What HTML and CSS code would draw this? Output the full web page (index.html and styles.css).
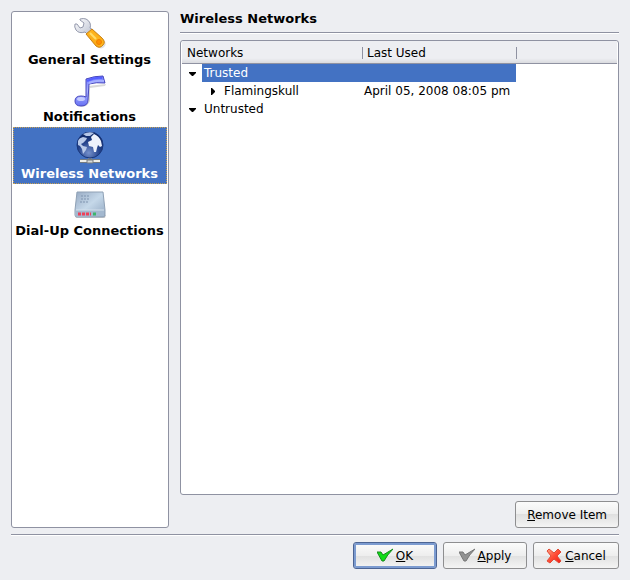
FILE: index.html
```html
<!DOCTYPE html>
<html lang="en">
<head>
    <meta charset="UTF-8">
    <meta name="viewport" content="width=device-width, initial-scale=1.0">
    <title>Wireless Networks</title>
    <link rel="stylesheet" href="styles.css">
</head>
<body>
    <div class="main">
        <nav class="sidebar">
            <a href="#general">
                <svg width="32" height="32" viewBox="0 0 32 32">
                    <defs>
                        <linearGradient id="steel" x1="0" y1="0" x2="1" y2="1">
                            <stop offset="0" stop-color="#ffffff"/>
                            <stop offset="1" stop-color="#b9bfd0"/>
                        </linearGradient>
                        <linearGradient id="orange" x1="0" y1="1" x2="1" y2="0">
                            <stop offset="0" stop-color="#f08a00"/>
                            <stop offset="0.5" stop-color="#ffb820"/>
                            <stop offset="1" stop-color="#f59a08"/>
                        </linearGradient>
                    </defs>
                    <path d="M14 17 L23 28 Q27 33 31 28 Q33 25 29 21 L20 13Z" fill="#000" opacity="0.12"/>
                    <path d="M6 1 Q13 -1 16 5 Q17 8 16 10 L19 12 L14 17 L11 14 Q5 16 2 12 Q0 9 1 6 L3 6 L6 10 L9 9 L10 5 L6 2 Z" fill="url(#steel)" stroke="#9499ac"/>
                    <path d="M12 16 L18 11 L28 20 Q32 24 29 27 Q26 31 22 28 Z" fill="url(#orange)" stroke="#c98215"/>
                    <path d="M16 15 L22 21" stroke="#ffdc68" stroke-width="2"/>
                    <circle cx="25" cy="24" r="2.500" fill="#ff8f00" stroke="#f08000"/>
                </svg>
                <span>General Settings</span>
            </a>
            <a href="#notifications">
                <svg width="32" height="32" viewBox="0 0 32 32">
                    <defs>
                        <linearGradient id="note" x1="0" y1="0" x2="0" y2="1">
                            <stop offset="0" stop-color="#6f78ff"/>
                            <stop offset="0.5" stop-color="#a9b2ff"/>
                            <stop offset="1" stop-color="#6872f4"/>
                        </linearGradient>
                    </defs>
                    <path d="M14 11 L32 9 L31 11 L16 13 L16 26 Q13 33 5 32 Q12 30 14 26Z" fill="#000" opacity="0.15"/>
                    <path d="M12 4 Q20 1 29 1 L31 8 Q22 7 15 9 L14 25 Q14 31 7 31 Q1 31 1 26 Q1 21 7 21 Q10 21 12 22 Z" fill="url(#note)" stroke="#4747bd"/>
                    <path d="M13 6 Q21 2 28 3" stroke="#555eff" stroke-width="2" fill="none"/>
                    <path d="M15 8 Q22 5 30 6" stroke="#a5afff" stroke-width="2" fill="none"/>
                    <ellipse cx="7" cy="24" rx="4" ry="2" fill="#c5ccff"/>
                </svg>
                <span>Notifications</span>
            </a>
            <a href="#wireless" class="selected">
                <svg width="32" height="32" viewBox="0 0 32 32">
                    <defs>
                        <radialGradient id="globe" cx="0.45" cy="0.8" r="0.8">
                            <stop offset="0" stop-color="#7590cb"/>
                            <stop offset="0.5" stop-color="#26458e"/>
                            <stop offset="1" stop-color="#081f5b"/>
                        </radialGradient>
                    </defs>
                    <path d="M14 26 H18 V29 H14Z" fill="#8b9299"/>
                    <path d="M6 29 H26" stroke="#747b81" stroke-width="4"/>
                    <path d="M6 29 H13 M19 29 H26" stroke="#eeeee8" stroke-width="2"/>
                    <path d="M13 28 H19 V31 H13Z" fill="#d8dad6" stroke="#777d83"/>
                    <circle cx="16" cy="13" r="13" fill="url(#globe)" stroke="#19377c"/>
                    <path d="M4 9 Q5 6 9 5 L13 6 L12 8 L9 11 L7 12 L9 14 L13 15 L12 18 L9 22 L8 17 L6 14 L4 13Z" fill="#b9cae9"/>
                    <path d="M17 5 L20 2 Q25 4 27 9 L28 14 L26 15 L24 13 L23 16 L22 20 L20 20 L19 15 L15 14 L14 10 L18 8Z" fill="#edf2fc"/>
                    <path d="M9 2 Q15 -1 20 1 L16 4 L12 4Z" fill="#b6c8e9"/>
                </svg>
                <span>Wireless Networks</span>
            </a>
            <a href="#dialup">
                <svg width="32" height="32" viewBox="0 0 32 32">
                    <defs>
                        <linearGradient id="modem" x1="0" y1="0" x2="1" y2="1">
                            <stop offset="0" stop-color="#97aac3"/>
                            <stop offset="0.5" stop-color="#c5d8e9"/>
                            <stop offset="1" stop-color="#91a7c1"/>
                        </linearGradient>
                    </defs>
                    <path d="M1 27 L2 29 H31 L32 26Z" fill="#000" opacity="0.2"/>
                    <path d="M3 3 H29 L31 21 V26 Q31 28 29 28 H3 Q1 28 1 26 V21Z" fill="url(#modem)" stroke="#8fa1b5"/>
                    <path d="M2 21 H30 V27 H2Z" fill="#a3b8cf"/>
                    <path d="M2 21 H30" stroke="#d4e1ec"/>
                    <path d="M7 7 H15 M7 10 H15 M6 13 H14" stroke="#7f94af" stroke-dasharray="2 1"/>
                    <path d="M4 25 H17" stroke="#ef4058" stroke-width="3" stroke-dasharray="3 1"/>
                    <path d="M19 25 H22" stroke="#3db56c" stroke-width="3"/>
                </svg>
                <span>Dial-Up Connections</span>
            </a>
        </nav>
        <section class="page">
            <h1>Wireless Networks</h1>
            <div class="tree">
                <table>
                    <colgroup>
                        <col class="col-name">
                        <col class="col-date">
                        <col>
                    </colgroup>
                    <thead>
                        <tr>
                            <th><span>Networks</span></th>
                            <th><span>Last Used</span></th>
                            <th></th>
                        </tr>
                    </thead>
                    <tbody>
                        <tr class="selected">
                            <td>
                                <div class="node">
                                    <svg width="20" height="18"><path d="M7 8 H14 V9 L11 12 H10 L7 9Z"/></svg>
                                    <span>Trusted</span>
                                </div>
                            </td>
                            <td></td>
                            <td></td>
                        </tr>
                        <tr>
                            <td>
                                <div class="node child">
                                    <svg width="20" height="18"><path d="M9 6 H10 L13 9 V10 L10 13 H9Z"/></svg>
                                    <span>Flamingskull</span>
                                </div>
                            </td>
                            <td>April 05, 2008 08:05 pm</td>
                            <td></td>
                        </tr>
                        <tr>
                            <td>
                                <div class="node">
                                    <svg width="20" height="18"><path d="M7 8 H14 V9 L11 12 H10 L7 9Z"/></svg>
                                    <span>Untrusted</span>
                                </div>
                            </td>
                            <td></td>
                            <td></td>
                        </tr>
                    </tbody>
                </table>
            </div>
            <button type="button" class="remove"><span><u>R</u>emove Item</span></button>
        </section>
    </div>
    <div class="buttons">
        <button type="button" class="default">
            <svg width="16" height="16" viewBox="0 0 16 16">
                <path d="M0 4 L4 4 L6 7 L16 1 Q10 7 7 13 L5 13Z" fill="#10dd18" stroke="#168a1b"/>
            </svg>
            <span><u>O</u>K</span>
        </button>
        <button type="button">
            <svg width="16" height="16" viewBox="0 0 16 16">
                <path d="M0 4 L4 4 L6 7 L16 1 Q10 7 7 13 L5 13Z" fill="#929292" stroke="#777777"/>
            </svg>
            <span><u>A</u>pply</span>
        </button>
        <button type="button" class="cancel">
            <svg width="16" height="16" viewBox="0 0 16 16">
                <defs>
                    <linearGradient id="red" x1="0" y1="0" x2="1" y2="1">
                        <stop offset="0" stop-color="#ffa080"/>
                        <stop offset="0.5" stop-color="#ff4b35"/>
                        <stop offset="1" stop-color="#f21c14"/>
                    </linearGradient>
                </defs>
                <path d="M3 1 L8 5 L12 1 L15 4 L11 8 L15 13 L13 15 L8 11 L4 15 L1 13 L5 8 L1 3Z" fill="url(#red)" stroke="#e04a35"/>
            </svg>
            <span><u>C</u>ancel</span>
        </button>
    </div>
</body>
</html>
```

FILE: styles.css
```css
* {
    box-sizing: border-box;
}
body {
    display: flex;
    flex-direction: column;
    min-height: 100vh;
    margin: 0;
    padding: 11px;
    background-color: #edeef2;
    color: #000;
    font-family: 'DejaVu Sans', sans-serif;
    font-size: 12px;
    line-height: 18px;
}
.main {
    display: flex;
    flex: 1;
    gap: 11px;
    padding-bottom: 6px;
}
.sidebar {
    width: 158px;
    flex-shrink: 0;
    padding: 1px;
    background-color: #fff;
    border: 1px solid #8f92a2;
    border-radius: 3px;
}
.sidebar a {
    display: flex;
    flex-direction: column;
    align-items: center;
    gap: 1px;
    height: 57px;
    padding-top: 4px;
    padding-right: 1px;
    border: 1px dotted transparent;
    color: #000;
    font-size: 13px;
    font-weight: bold;
    line-height: 18px;
    text-decoration: none;
    white-space: nowrap;
}
.sidebar a.selected {
    background-color: #4372c3;
    border-color: #c9a050;
    color: #fff;
}
.page {
    display: flex;
    flex: 1;
    flex-direction: column;
    min-width: 0;
}
h1 {
    margin: 0 0 7px;
    padding-bottom: 5px;
    border-bottom: 1px solid #8f92a2;
    box-shadow: 0 1px #fff;
    font-size: 13px;
    line-height: 16px;
}
.tree {
    flex: 1;
    padding: 0 1px;
    background-color: #fff;
    border: 1px solid #8f92a2;
    border-radius: 3px;
}
table {
    width: 100%;
    table-layout: fixed;
    border-collapse: separate;
    border-spacing: 0;
}
.col-name {
    width: 180px;
}
.col-date {
    width: 154px;
}
thead {
    background: linear-gradient(#edeef2 75%, #d6d7db);
}
th {
    height: 23px;
    padding: 0;
    border-bottom: 1px solid #8f92a2;
    font-weight: normal;
    text-align: left;
}
th span {
    display: block;
    padding: 1px 0 0 5px;
}
th + th {
    background: linear-gradient(#8f92a2, #8f92a2) 0 6px / 1px 12px no-repeat;
}
td {
    height: 18px;
    padding: 0 2px;
    white-space: nowrap;
}
td:first-child {
    padding: 0;
}
.node {
    display: flex;
}
.node span {
    flex: 1;
    padding-left: 2px;
}
.child {
    padding-left: 20px;
}
.selected .node span,
.selected td:nth-child(2) {
    background-color: #4372c3;
    color: #fff;
}
button {
    display: flex;
    align-items: center;
    justify-content: center;
    gap: 3px;
    min-width: 84px;
    height: 27px;
    padding: 0 11px;
    background: linear-gradient(#fbfbfb, #eeeeee 50%, #e0e0e0 50%, #f4f4f4);
    border: 1px solid #8e8e90;
    border-radius: 3px;
    color: #000;
    font-family: inherit;
    font-size: 12px;
    line-height: 18px;
}
.remove {
    align-self: flex-end;
    margin-top: 6px;
}
.buttons {
    display: flex;
    justify-content: flex-end;
    gap: 6px;
    padding-top: 7px;
    border-top: 1px solid #8f92a2;
    box-shadow: inset 0 1px #fff;
}
.cancel {
    min-width: 86px;
}
.default {
    border-color: #4c6493;
    box-shadow: inset 0 0 0 2px #7c9bd0;
}
```
